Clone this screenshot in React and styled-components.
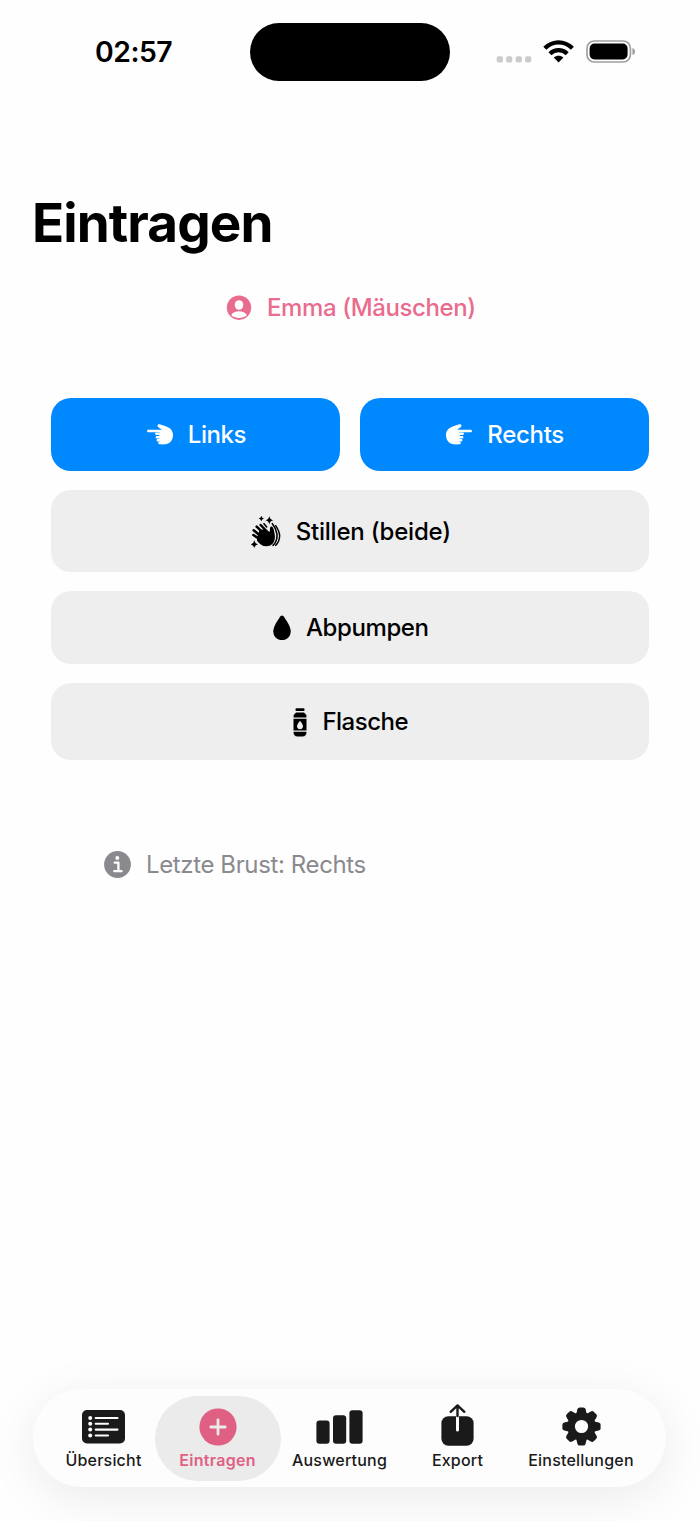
import React, { useState } from 'react';
import styled, { createGlobalStyle } from 'styled-components';

const GlobalStyle = createGlobalStyle`
    * {
        box-sizing: border-box;
    }
    body {
        margin: 0;
        background: #fefefe;
        font-family: Inter, "Liberation Sans", sans-serif;
        -webkit-font-smoothing: antialiased;
    }
    svg {
        display: block;
        flex: none;
    }
`;

const Screen = styled.div`
    display: flex;
    flex-direction: column;
    width: 700px;
    height: 1521px;
    overflow: hidden;
    background: #fefefe;
    color: #000;
`;

const StatusBar = styled.header`
    display: grid;
    grid-template-columns: 250px 200px 250px;
    align-items: center;
    height: 58px;
    margin-top: 22.5px;
`;

const Clock = styled.div`
    padding-left: 95px;
    font-size: 28.4px;
    font-weight: 600;
    letter-spacing: -0.5px;
    line-height: 58px;
`;

const Island = styled.div`
    height: 58px;
    border-radius: 29px;
    background: #000;
`;

const StatusIcons = styled.div`
    padding-left: 46px;
`;

const Title = styled.h1`
    margin: 110px 0 0 32px;
    font-size: 53px;
    font-weight: 700;
    line-height: 64px;
    letter-spacing: -0.9px;
`;

const Label = styled.span`
    font-size: 24px;
    font-weight: ${({ $weight }) => $weight || 400};
    letter-spacing: ${({ $spacing }) => $spacing || 0}px;
    line-height: 30px;
    white-space: nowrap;
`;

const ChildButton = styled.button`
    display: flex;
    align-items: center;
    align-self: flex-start;
    gap: 15px;
    margin: 38px 0 0 226px;
    padding: 0;
    border: 0;
    background: none;
    color: #e96b8d;
    font-family: inherit;
`;

const Actions = styled.main`
    display: grid;
    grid-template-columns: 1fr 1fr;
    grid-template-rows: 73px 82px 73px 76.5px;
    gap: 19.3px;
    margin: 75px 51px 0;
`;

const ActionButton = styled.button`
    display: flex;
    align-items: center;
    justify-content: center;
    gap: 15px;
    grid-column: ${({ $primary }) => ($primary ? 'auto' : '1 / -1')};
    padding: 1.5px 0 0 1.5px;
    border: 0;
    border-radius: 20px;
    background: ${({ $primary }) => ($primary ? '#0088ff' : '#eeeeee')};
    color: ${({ $primary }) => ($primary ? '#fff' : '#000')};
    font-family: inherit;
`;

const Hint = styled.p`
    display: flex;
    align-items: center;
    gap: 15px;
    margin: 90px 0 0 104px;
    color: #8a8a8e;
`;

const TabBar = styled.nav`
    display: grid;
    grid-template-columns: 102px 126px 118px 118px 129px;
    width: 633px;
    height: 98px;
    margin: auto 0 34px 33px;
    padding: 6.5px 0 6px 19.5px;
    border-radius: 49px;
    background: #fdfdfd;
    box-shadow: 0 10px 50px rgba(0, 0, 0, 0.08), 0 0 1px rgba(255, 255, 255, 1);
`;

const Tab = styled.button`
    display: flex;
    flex-direction: column;
    align-items: center;
    padding: 8px 0 0;
    border: 0;
    border-radius: 43px;
    background: ${({ $active }) => ($active ? '#ebebeb' : 'transparent')};
    color: ${({ $active }) => ($active ? '#e06083' : '#1a1a1a')};
    font-family: inherit;
`;

const TabIcon = styled.span`
    display: flex;
    align-items: flex-end;
    justify-content: center;
    height: 42px;
    padding-bottom: ${({ $lift }) => $lift}px;
`;

const TabLabel = styled.span`
    font-size: 16px;
    font-weight: ${({ $active }) => ($active ? 600 : 500)};
    letter-spacing: ${({ $active }) => ($active ? 0.3 : 0.2)}px;
    line-height: 20px;
    margin-top: 4.5px;
    white-space: nowrap;
`;

const StatusSymbols = () => (
    <svg width="142" height="26" viewBox="0 0 142 26">
        <g fill="#cbcbcb">
            <rect x="0.7" y="17.3" width="6.2" height="6.2" rx="1.7" />
            <rect x="10.1" y="17.3" width="6.2" height="6.2" rx="1.7" />
            <rect x="19.7" y="17.3" width="6.2" height="6.2" rx="1.7" />
            <rect x="29.1" y="17.3" width="6.2" height="6.2" rx="1.7" />
        </g>
        <g fill="none" stroke="#000" strokeWidth="4.3">
            <path d="M48.8 9.2 C56.8 1.3 68.4 1.3 76.4 9.2" />
            <path d="M54 14.8 C59 10 66.2 10 71.2 14.8" />
        </g>
        <path d="M57.8 18.6 C60.5 16.1 64.7 16.1 67.4 18.6 L62.6 23.4 Z" />
        <rect x="91" y="2" width="43.4" height="21" rx="7.2" fill="none" stroke="#a0a0a0" strokeWidth="1.7" />
        <rect x="93.6" y="4.6" width="38" height="15.8" rx="4.8" />
        <path d="M136.4 8.9 C140 10 140 14.9 136.4 16 Z" fill="#a0a0a0" />
    </svg>
);

const PersonIcon = () => (
    <svg width="26" height="26" viewBox="0 0 26 26">
        <circle cx="13" cy="12.7" r="12.2" fill="currentColor" />
        <ellipse cx="13" cy="10" rx="4.3" ry="4.8" fill="#fefefe" />
        <path d="M5.2 20.2 C7 17.3 10 16.3 13 16.3 C16 16.3 19 17.3 20.8 20.2 C16.5 23.9 9.5 23.9 5.2 20.2Z" fill="#fefefe" />
    </svg>
);

const PointIcon = ({ flip }) => (
    <svg width="26" height="21" viewBox="0 0 78 63">
        <g transform={flip ? 'translate(78 0) scale(-1 1)' : undefined}>
            <path
                fill="currentColor"
                d="M4 17 H45 L34 10 C29 6 32 -1 38 1 L56 7 C70 12 78 20 78 33 C78 51 67 61 50 61 H43 L36 40 L38 25 H4 C-1 25 -1 17 4 17 Z"
            />
            <path
                fill="none"
                stroke="currentColor"
                strokeWidth="7.6"
                strokeLinecap="round"
                d="M28 29.5 H45 M29.5 39.5 H45 M32.5 48.5 H47 M37.5 56.8 H50"
            />
        </g>
    </svg>
);

const ClapIcon = () => (
    <svg width="30" height="32" viewBox="0 0 90 96">
        <g fill="currentColor">
            <path d="M31 -1 Q32.5 6 39 7.5 Q32.5 9 31 16 Q29.5 9 23 7.5 Q29.5 6 31 -1Z" />
            <path d="M55 0 Q57 11 67 13 Q57 15 55 25 Q53 15 43 13 Q53 11 55 0Z" />
            <path d="M10 73 Q12 83 21 85 Q12 87 10 96 Q8 87 -1 85 Q8 83 10 73Z" />
            <path d="M18 64 L26 42 L40 40 L56 48 C58 42 55 35 59 32 C67 29 69 43 71 54 C75 76 64 91 46 91 C34 91 26 84 18 74Z" />
        </g>
        <g fill="none" stroke="currentColor" strokeLinecap="round">
            <path strokeWidth="7.6" d="M50 49 L29 27 M42 56 L17 32 M34 64 L8 43 M28 71 L7 57" />
            <path strokeWidth="4.8" d="M39 23 L47 33 M64 23 C75 36 76 44 78 55 C79 70 74 81 66 88" />
            <path strokeWidth="4.4" d="M74 29 C83 43 85 48 86 58 C86 71 81 82 74 88" />
        </g>
    </svg>
);

const DropIcon = () => (
    <svg width="18" height="26" viewBox="0 0 18 26">
        <path fill="currentColor" d="M7.6 1.2 Q9 -.4 10.4 1.2 C13.4 5.2 17.7 11.6 17.7 16.2 C17.7 21.6 13.8 25 9 25 C4.2 25 .3 21.6 .3 16.2 C.3 11.6 4.6 5.2 7.6 1.2Z" />
    </svg>
);

const BottleIcon = () => (
    <svg width="14" height="29" viewBox="0 0 14 29">
        <rect x="2.5" y="0.3" width="9" height="2.8" rx="1" />
        <path d="M3 4.5 H11 Q13.5 6 13.5 9.5 H.5 Q.5 6 3 4.5Z" />
        <path fillRule="evenodd" d="M.5 10.8 H13.5 V22.4 H.5Z M7 12.7 C5.5 15 4 16.5 4 18.3 C4 22.2 10 22.2 10 18.3 C10 16.5 8.5 15 7 12.7Z" />
        <path d="M.5 23.7 H13.5 Q13.5 28.4 9.5 28.4 H4.5 Q.5 28.4 .5 23.7Z" />
    </svg>
);

const InfoIcon = () => (
    <svg width="27" height="27" viewBox="0 0 27 27">
        <circle cx="13.5" cy="13.5" r="13.4" fill="currentColor" />
        <circle cx="13.3" cy="7.1" r="2" fill="#fefefe" />
        <path d="M10.7 11.7 H14.4 V20 M10.3 20.2 H17.6" fill="none" stroke="#fefefe" strokeWidth="2.3" strokeLinecap="round" strokeLinejoin="round" />
    </svg>
);

const ListIcon = () => (
    <svg width="43" height="34" viewBox="0 0 43 34">
        <rect width="43" height="33.5" rx="5" fill="currentColor" />
        <g fill="#fdfdfd">
            <circle cx="8.2" cy="8" r="2" />
            <circle cx="8.2" cy="13.8" r="2" />
            <circle cx="8.2" cy="19.6" r="2" />
            <circle cx="8.2" cy="25.5" r="2" />
        </g>
        <path d="M13.7 8 H35.5 M13.7 13.8 H26 M13.7 19.6 H35.5 M13.7 25.5 H26" stroke="#fdfdfd" strokeWidth="2.1" strokeLinecap="round" />
    </svg>
);

const PlusIcon = () => (
    <svg width="38" height="38" viewBox="0 0 38 38">
        <circle cx="19" cy="19" r="18.6" fill="currentColor" />
        <path d="M19 11.8 V26.2 M11.8 19 H26.2" stroke="#ebebeb" strokeWidth="2.8" strokeLinecap="round" />
    </svg>
);

const BarsIcon = () => (
    <svg width="47" height="34" viewBox="0 0 47 34" fill="currentColor">
        <rect x="0.4" y="10.4" width="13.2" height="23.4" rx="3" />
        <rect x="17" y="5.2" width="13.2" height="28.6" rx="3" />
        <rect x="33.4" y="0.2" width="13.2" height="33.6" rx="3" />
    </svg>
);

const ExportIcon = () => (
    <svg width="33" height="42" viewBox="0 0 33 42">
        <rect x="0.4" y="12.2" width="32.2" height="29.6" rx="7" fill="currentColor" />
        <path d="M16.5 12.2 V26" stroke="#fdfdfd" strokeWidth="3" strokeLinecap="round" />
        <path d="M16.5 12 V2 M9.7 7.8 L16.5 1.4 L23.3 7.8" fill="none" stroke="currentColor" strokeWidth="2.4" strokeLinecap="round" strokeLinejoin="round" />
    </svg>
);

const GearIcon = () => (
    <svg width="39" height="39" viewBox="-19.5 -19.5 39 39" fill="currentColor">
        {[0, 45, 90, 135, 180, 225, 270, 315].map((deg) => (
            <path
                key={deg}
                transform={`rotate(${deg})`}
                d="M-5.6 -11 L-4.1 -17.2 Q-3.6 -19.1 -1.8 -19.1 H1.8 Q3.6 -19.1 4.1 -17.2 L5.6 -11Z"
            />
        ))}
        <circle r="10.4" fill="none" stroke="currentColor" strokeWidth="7.6" />
    </svg>
);

const tabs = [
    { id: 'overview', label: 'Übersicht', Icon: ListIcon, lift: 2 },
    { id: 'entry', label: 'Eintragen', Icon: PlusIcon, lift: 0 },
    { id: 'stats', label: 'Auswertung', Icon: BarsIcon, lift: 2 },
    { id: 'export', label: 'Export', Icon: ExportIcon, lift: 0 },
    { id: 'settings', label: 'Einstellungen', Icon: GearIcon, lift: 0 },
];

const App = () => {
    const [active, setActive] = useState('entry');

    return (
        <Screen>
            <GlobalStyle />
            <StatusBar>
                <Clock>02:57</Clock>
                <Island />
                <StatusIcons>
                    <StatusSymbols />
                </StatusIcons>
            </StatusBar>
            <Title>Eintragen</Title>
            <ChildButton type="button">
                <PersonIcon />
                <Label $weight={450} $spacing={-0.4}>Emma (Mäuschen)</Label>
            </ChildButton>
            <Actions>
                <ActionButton type="button" $primary>
                    <PointIcon />
                    <Label $weight={450} $spacing={-0.4}>Links</Label>
                </ActionButton>
                <ActionButton type="button" $primary>
                    <PointIcon flip />
                    <Label $weight={450} $spacing={-0.3}>Rechts</Label>
                </ActionButton>
                <ActionButton type="button">
                    <ClapIcon />
                    <Label $weight={450} $spacing={-0.2}>Stillen (beide)</Label>
                </ActionButton>
                <ActionButton type="button">
                    <DropIcon />
                    <Label $weight={450} $spacing={-0.4}>Abpumpen</Label>
                </ActionButton>
                <ActionButton type="button">
                    <BottleIcon />
                    <Label $weight={450} $spacing={-0.5}>Flasche</Label>
                </ActionButton>
            </Actions>
            <Hint>
                <InfoIcon />
                <Label $spacing={-0.38}>Letzte Brust: Rechts</Label>
            </Hint>
            <TabBar>
                {tabs.map(({ id, label, Icon, lift }) => (
                    <Tab key={id} type="button" $active={active === id} onClick={() => setActive(id)}>
                        <TabIcon $lift={lift}>
                            <Icon />
                        </TabIcon>
                        <TabLabel $active={active === id}>{label}</TabLabel>
                    </Tab>
                ))}
            </TabBar>
        </Screen>
    );
}

export default App;
